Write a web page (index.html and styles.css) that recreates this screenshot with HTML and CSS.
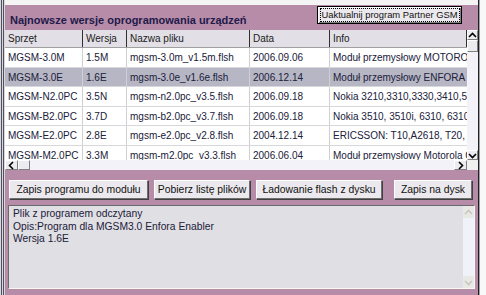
FILE: index.html
```html
<!DOCTYPE html>
<html>
<head>
<meta charset="utf-8">
<link rel="stylesheet" href="styles.css">
</head>
<body>
<div class="window">
  <div class="frame-left"><div class="fl1"></div><div class="fl2"></div></div>
  <div class="main">
    <div class="topbar">
      <div class="title">Najnowsze wersje oprogramowania urządzeń</div>
      <button class="btn update"><span class="focus">Uaktualnij program Partner GSM</span></button>
    </div>
    <div class="grid-wrap">
      <div class="grid-area">
        <div class="table">
          <div class="row head">
            <div class="c c1">Sprzęt</div><div class="c c2">Wersja</div><div class="c c3">Nazwa pliku</div><div class="c c4">Data</div><div class="c c5">Info</div>
          </div>
          <div class="row">
            <div class="c c1">MGSM-3.0M</div><div class="c c2">1.5M</div><div class="c c3">mgsm-3.0m_v1.5m.flsh</div><div class="c c4">2006.09.06</div><div class="c c5">Moduł przemysłowy MOTOROLA</div>
          </div>
          <div class="row sel">
            <div class="c c1">MGSM-3.0E</div><div class="c c2">1.6E</div><div class="c c3">mgsm-3.0e_v1.6e.flsh</div><div class="c c4">2006.12.14</div><div class="c c5">Moduł przemysłowy ENFORA G</div>
          </div>
          <div class="row">
            <div class="c c1">MGSM-N2.0PC</div><div class="c c2">3.5N</div><div class="c c3">mgsm-n2.0pc_v3.5.flsh</div><div class="c c4">2006.09.18</div><div class="c c5">Nokia 3210,3310,3330,3410,5</div>
          </div>
          <div class="row">
            <div class="c c1">MGSM-B2.0PC</div><div class="c c2">3.7D</div><div class="c c3">mgsm-b2.0pc_v3.7.flsh</div><div class="c c4">2006.09.18</div><div class="c c5">Nokia 3510, 3510i, 6310, 6310</div>
          </div>
          <div class="row">
            <div class="c c1">MGSM-E2.0PC</div><div class="c c2">2.8E</div><div class="c c3">mgsm-e2.0pc_v2.8.flsh</div><div class="c c4">2004.12.14</div><div class="c c5">ERICSSON: T10,A2618, T20, T</div>
          </div>
          <div class="row">
            <div class="c c1">MGSM-M2.0PC</div><div class="c c2">3.3M</div><div class="c c3">mgsm-m2.0pc_v3.3.flsh</div><div class="c c4">2006.06.04</div><div class="c c5">Moduł przemysłowy Motorola G</div>
          </div>
        </div>
        <div class="vscroll">
          <div class="sbtn"><svg width="9" height="9" viewBox="0 0 9 9"><path d="M1 6 L4.5 2.5 L8 6" fill="none" stroke="#000" stroke-width="1.6"/></svg></div>
          <div class="vthumb"></div>
          <div class="vtrack"></div>
          <div class="sbtn"><svg width="9" height="9" viewBox="0 0 9 9"><path d="M1 3 L4.5 6.5 L8 3" fill="none" stroke="#000" stroke-width="1.6"/></svg></div>
        </div>
      </div>
      <div class="hscroll">
        <div class="hbtn"><svg width="9" height="9" viewBox="0 0 9 9"><path d="M6 1 L2.5 4.5 L6 8" fill="none" stroke="#000" stroke-width="1.6"/></svg></div>
        <div class="hthumb"></div>
        <div class="htrack"></div>
        <div class="hbtn"><svg width="9" height="9" viewBox="0 0 9 9"><path d="M3 1 L6.5 4.5 L3 8" fill="none" stroke="#000" stroke-width="1.6"/></svg></div>
        <div class="corner"></div>
      </div>
    </div>
    <div class="bottom">
      <div class="buttons">
        <button class="btn b1">Zapis programu do modułu</button>
        <button class="btn b2">Pobierz listę plików</button>
        <button class="btn b3">Ładowanie flash z dysku</button>
        <button class="btn b4">Zapis na dysk</button>
      </div>
      <div class="memo">
        <div class="memo-text">
          <div>Plik z programem odczytany</div>
          <div>Opis:Program dla MGSM3.0 Enfora Enabler</div>
          <div>Wersja 1.6E</div>
        </div>
        <div class="memo-scroll">
          <div class="msbtn"><svg width="9" height="9" viewBox="0 0 9 9"><path d="M1 6 L4.5 2.5 L8 6" fill="none" stroke="#c8c8c0" stroke-width="1.6"/></svg></div>
          <div class="mstrack"></div>
          <div class="msbtn"><svg width="9" height="9" viewBox="0 0 9 9"><path d="M1 3 L4.5 6.5 L8 3" fill="none" stroke="#c8c8c0" stroke-width="1.6"/></svg></div>
        </div>
      </div>
    </div>
  </div>
  <div class="frame-right"></div>
</div>
</body>
</html>
```

FILE: styles.css
```css
* { box-sizing: border-box; }
html, body { margin: 0; padding: 0; }
body {
  width: 486px;
  height: 295px;
  overflow: hidden;
  background: #f4f4f4;
  font-family: "Liberation Sans", Arial, sans-serif;
  font-size: 10px;
  color: #111;
}
.window {
  display: flex;
  width: 486px;
  height: 295px;
}
.frame-left {
  width: 5px;
  display: flex;
  background: #d8d8dc;
}
.fl1 { width: 1px; margin-left: 1px; background: #505060; }
.fl2 { width: 1px; margin-left: 1px; background: #505060; }
.frame-right {
  width: 8px;
  border-left: 1px solid #202020;
  background: #f8f8f8;
  box-shadow: inset 1px 0 0 #a0a0a8;
}
.main {
  width: 473px;
  display: flex;
  flex-direction: column;
  padding-top: 5px;
}
.topbar {
  height: 25px;
  background: #b68ca8;
  display: flex;
  align-items: flex-start;
  justify-content: space-between;
  padding: 1px 16px 0 5px;
}
.title {
  font-weight: bold;
  font-size: 11px;
  color: #1e1a4a;
  margin-top: 8px;
}
.btn {
  font-family: "Liberation Sans", Arial, sans-serif;
  font-size: 10.4px;
  color: #111;
  background: #ebe9ed;
  border: 1px solid;
  border-color: #ffffff #6e6e6e #6e6e6e #ffffff;
  box-shadow: 1px 1px 0 #404040;
  padding: 0;
  height: 19px;
  line-height: 16px;
  white-space: nowrap;
}
.update {
  width: 145px;
  height: 18px;
  margin-top: 0;
  font-size: 9.4px;
  border: 1px solid #000;
  box-shadow: inset 1px 1px 0 #fff, inset -1px -1px 0 #808080;
  display: flex;
  align-items: center;
  justify-content: center;
}
.focus {
  border: 1px dotted #000;
  padding: 0 1px;
  line-height: 12px;
  display: inline-block;
}
.grid-wrap {
  height: 140px;
  background: #fff;
  display: flex;
  flex-direction: column;
}
.grid-area {
  display: flex;
  height: 130px;
}
.table {
  width: 462px;
  overflow: hidden;
}
.row {
  display: flex;
  height: 19.5px;
  border-bottom: 1px solid #d8d8dc;
}
.row.head {
  height: 18px;
  background: #e2e0e6;
  border-bottom: 1px solid #a0a0a0;
}
.row.sel { background: #b6b6c4; }
.c {
  flex: none;
  padding: 4px 0 0 3px;
  white-space: nowrap;
  overflow: hidden;
  border-right: 1px solid #d0d0d4;
  color: #20203a;
}
.head .c { border-right: 1px solid #303030; padding-top: 3px; color: #222; }
.c1 { width: 78px; }
.c2 { width: 44px; }
.c3 { width: 123px; }
.c4 { width: 80px; }
.c5 { width: 137px; border-right: none; }
.vscroll {
  width: 11px;
  display: flex;
  flex-direction: column;
  background: #f0f0f6;
}
.sbtn, .hbtn {
  width: 11px;
  height: 10px;
  background: #ececf0;
  border: 1px solid;
  border-color: #fff #808080 #808080 #fff;
  display: flex;
  align-items: center;
  justify-content: center;
}
.vthumb {
  height: 12px;
  background: #ececf0;
  border: 1px solid;
  border-color: #fff #808080 #808080 #fff;
}
.vtrack { flex: 1; background: #f2f2f8; }
.hscroll {
  display: flex;
  height: 10px;
}
.hbtn { width: 13px; height: 10px; }
.hthumb {
  width: 12px;
  background: #ececf0;
  border: 1px solid;
  border-color: #fff #808080 #808080 #fff;
}
.htrack { flex: 1; background: #f2f2f8; }
.corner { width: 11px; background: #f0f0f0; }
.bottom {
  flex: 1;
  background: #b68ca8;
  padding: 10px 3px 6px 3px;
  display: flex;
  flex-direction: column;
}
.buttons {
  display: flex;
  height: 20px;
  padding-left: 1px;
}
.b1 { width: 139px; }
.b2 { width: 96px; margin-left: 6px; }
.b3 { width: 126px; margin-left: 6px; }
.b4 { width: 78px; margin-left: 12px; }
.memo {
  margin-top: 5px;
  flex: 1;
  display: flex;
  background: #e0dfe3;
  border: 1px solid;
  border-color: #6a6a6a #f8f8f0 #f8f8f0 #6a6a6a;
}
.memo-text {
  flex: 1;
  padding: 2px 0 0 4px;
  font-size: 10.3px;
  line-height: 12.5px;
  color: #20203a;
}
.memo-scroll {
  width: 11px;
  display: flex;
  flex-direction: column;
  background: #f0f2fa;
}
.msbtn {
  height: 12px;
  background: #e8e8e4;
  display: flex;
  align-items: center;
  justify-content: center;
}
.mstrack { flex: 1; }
```
